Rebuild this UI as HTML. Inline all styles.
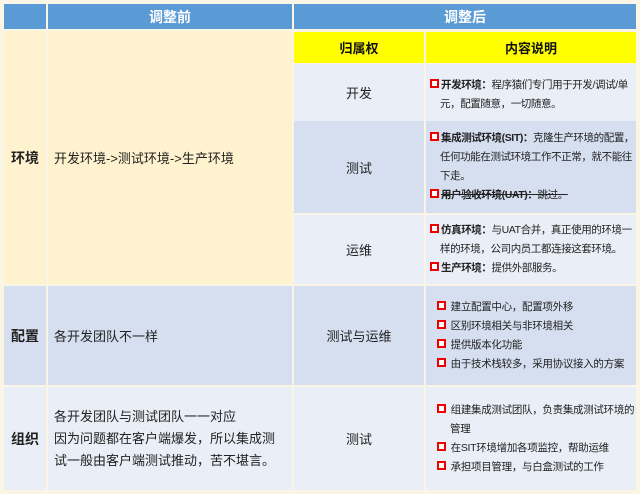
<!DOCTYPE html>
<html><head><meta charset="utf-8"><style>
body{margin:0;width:640px;height:494px;background:#fbf5e6;position:relative;overflow:hidden;font-family:"Liberation Sans","Noto Sans CJK SC",sans-serif;color:#222}
.c{position:absolute;box-sizing:border-box;display:flex;align-items:center;}
.h{background:#5b9bd5;color:#fff;font-weight:bold;font-size:14px;justify-content:center}
.y{background:#ffff00;font-weight:bold;font-size:13px;justify-content:center;color:#111}
.cr{background:#fff3cf}
.l{background:#e9eef7}
.d{background:#d5dff0}
.ctr{justify-content:center;font-size:13px}
.t{font-size:10.5px;line-height:19px;display:block;padding:0 0 0 4px;letter-spacing:-0.4px}
.t p{margin:0;padding-left:10px;text-indent:-10px}
.b{display:inline-block;width:5px;height:5px;border:2px solid #e00;background:#fff;margin-right:2px;vertical-align:0px;text-indent:0}
.k{font-weight:bold;font-size:14px;justify-content:center}
.s{font-size:13px;padding-left:6px;padding-right:14px}
ul{margin:0;padding:0 0 0 6px;list-style:none;letter-spacing:-0.3px}
ul li{font-size:10.5px;line-height:19px;padding-left:18px;text-indent:-13px}
</style></head><body>
<div class="c h" style="left:4px;top:4px;width:42px;height:25px"></div>
<div class="c h" style="left:48px;top:4px;width:244px;height:25px">调整前</div>
<div class="c h" style="left:294px;top:4px;width:342px;height:25px">调整后</div>

<div class="c cr k" style="left:4px;top:31px;width:42px;height:253px">环境</div>
<div class="c cr s" style="left:48px;top:31px;width:244px;height:253px">开发环境-&gt;测试环境-&gt;生产环境</div>
<div class="c y" style="left:294px;top:32px;width:130px;height:31px">归属权</div>
<div class="c y" style="left:426px;top:32px;width:210px;height:31px">内容说明</div>

<div class="c l ctr" style="left:294px;top:64px;width:130px;height:57px">开发</div>
<div class="c l" style="left:426px;top:64px;width:210px;height:57px"><div class="t" style="padding-top:4px"><p><span class="b"></span><b>开发环境：</b>程序猿们专门用于开发/调试/单元，配置随意，一切随意。</p></div></div>

<div class="c d ctr" style="left:294px;top:121px;width:130px;height:92px">测试</div>
<div class="c d" style="left:426px;top:121px;width:210px;height:92px"><div class="t"><p><span class="b"></span><b>集成测试环境(SIT)：</b>克隆生产环境的配置，任何功能在测试环境工作不正常，就不能往下走。</p><p><span class="b"></span><s><b>用户验收环境(UAT)：</b>跳过。</s></p></div></div>

<div class="c l ctr" style="left:294px;top:215px;width:130px;height:69px">运维</div>
<div class="c l" style="left:426px;top:215px;width:210px;height:69px"><div class="t"><p><span class="b"></span><b>仿真环境：</b>与UAT合并，真正使用的环境一样的环境，公司内员工都连接这套环境。</p><p><span class="b"></span><b>生产环境：</b>提供外部服务。</p></div></div>

<div class="c d k" style="left:4px;top:286px;width:42px;height:99px">配置</div>
<div class="c d s" style="left:48px;top:286px;width:244px;height:99px">各开发团队不一样</div>
<div class="c d ctr" style="left:294px;top:286px;width:130px;height:99px">测试与运维</div>
<div class="c d" style="left:426px;top:286px;width:210px;height:99px"><ul><li><span class="b"></span> 建立配置中心，配置项外移</li><li><span class="b"></span> 区别环境相关与非环境相关</li><li><span class="b"></span> 提供版本化功能</li><li><span class="b"></span> 由于技术栈较多，采用协议接入的方案</li></ul></div>

<div class="c l k" style="left:4px;top:387px;width:42px;height:103px">组织</div>
<div class="c l s" style="left:48px;top:387px;width:244px;height:103px;line-height:22px;font-size:13px"><div>各开发团队与测试团队一一对应<br>因为问题都在客户端爆发，所以集成测试一般由客户端测试推动，苦不堪言。</div></div>
<div class="c l ctr" style="left:294px;top:387px;width:130px;height:103px">测试</div>
<div class="c l" style="left:426px;top:387px;width:210px;height:103px"><ul><li><span class="b"></span> 组建集成测试团队，负责集成测试环境的管理</li><li><span class="b"></span> 在SIT环境增加各项监控，帮助运维</li><li><span class="b"></span> 承担项目管理，与白盒测试的工作</li></ul></div>
</body></html>
